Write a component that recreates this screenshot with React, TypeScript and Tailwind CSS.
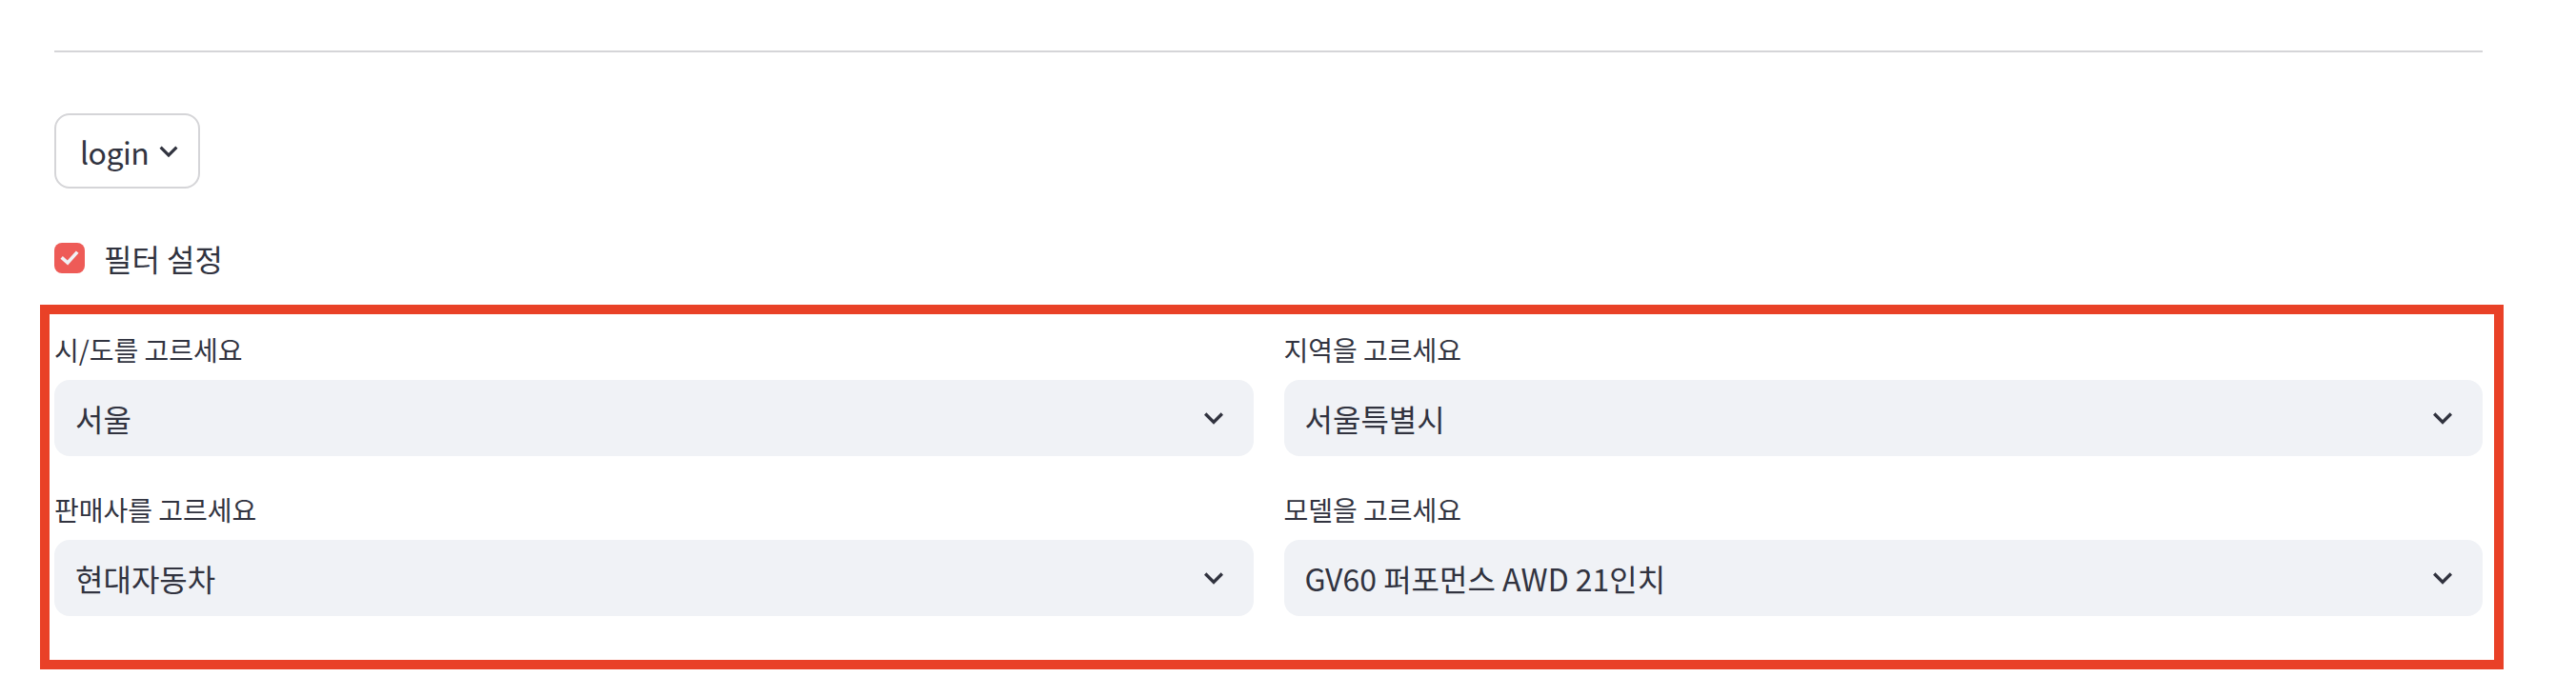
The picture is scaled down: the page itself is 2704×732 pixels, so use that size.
import React from "react";

const Chevron = ({ className }: { className?: string }) => (
  <svg viewBox="0 0 24 24" className={className} fill="currentColor">
    <path d="M16.59 8.59 12 13.17 7.41 8.59 6 10l6 6 6-6z" />
  </svg>
);

const Select = ({ label, value }: { label: string; value: string }) => (
  <div className="flex flex-col">
    <div className="h-[48px] flex items-center text-[28px] text-[#31333f] mb-2">{label}</div>
    <div className="h-[80px] bg-[#f0f2f6] rounded-[16px] flex items-center justify-between pl-[22px] pr-[22px]">
      <span className="text-[32px] text-[#31333f]">{value}</span>
      <Chevron className="w-[40px] h-[40px] text-[#31333f]" />
    </div>
  </div>
);

export default function App() {
  return (
    <div className="w-[2704px] h-[732px] bg-white font-['Noto_Sans_CJK_KR',sans-serif] overflow-hidden">
      <div className="ml-[57px] w-[2549px] pt-[53px]">
        <div className="h-[2px] bg-[#d5d5d8]" />
        <div className="mt-[64px]">
          <button className="h-[79px] w-[153px] border-2 border-[#d5d5d8] rounded-[16px] flex items-center pl-[25px] gap-[2px] text-[32px] text-[#31333f]">
            <span className="tracking-[-0.5px]">login</span>
            <Chevron className="w-[38px] h-[38px]" />
          </button>
        </div>
        <div className="mt-[56px] h-[34px] flex items-center gap-[20px]">
          <div className="w-[32px] h-[32px] rounded-[8px] bg-[#ee5b57] flex items-center justify-center">
            <svg viewBox="0 0 24 24" className="w-[24px] h-[24px]" fill="none" stroke="#f0f2f6" strokeWidth="3.6" strokeLinecap="square">
              <polyline points="5,12.5 10,17 19,7" />
            </svg>
          </div>
          <span className="text-[32px] text-[#31333f]">필터 설정</span>
        </div>
        <div className="mt-[32px] -ml-[15px] w-[2586px] border-[10px] border-[#e94127] pl-[5px] pr-[12px] pt-[13px] pb-[46px]">
          <div className="grid grid-cols-2 gap-x-[32px] gap-y-[32px]">
            <Select label="시/도를 고르세요" value="서울" />
            <Select label="지역을 고르세요" value="서울특별시" />
            <Select label="판매사를 고르세요" value="현대자동차" />
            <Select label="모델을 고르세요" value="GV60 퍼포먼스 AWD 21인치" />
          </div>
        </div>
      </div>
    </div>
  );
}
